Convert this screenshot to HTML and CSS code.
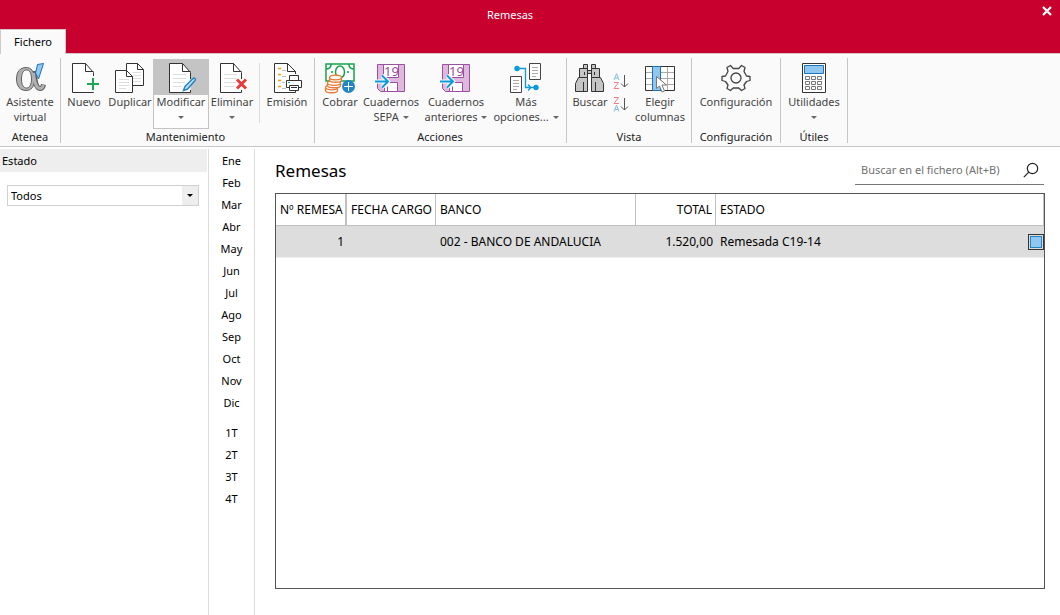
FILE: index.html
```html
<!DOCTYPE html>
<html lang="es">
<head>
<meta charset="utf-8">
<title>Remesas</title>
<link rel="stylesheet" href="styles.css">
</head>
<body>
<div class="app">
  <header class="titlebar">
    <div class="titlebar-row">
      <span class="window-title">Remesas</span>
      <button class="close" type="button" aria-label="Cerrar">
        <svg width="10" height="10" viewBox="0 0 10 10"><path d="M1 1l8 8M9 1L1 9" stroke="#fff" stroke-width="2.2"/></svg>
      </button>
    </div>
    <nav class="tabs"><button class="tab" type="button">Fichero</button></nav>
  </header>

  <div class="ribbon">
    <section class="group">
      <div class="tools">
        <button class="tool w-52" type="button">
          <svg class="icon" width="32" height="32" viewBox="0 0 32 32" fill="none">
            <path d="M20 9C21 18 21.500 26.500 26 26.500C28 26.500 29 25 29.500 22.500" stroke="#606060" stroke-width="5"/>
            <path d="M12 5.500C17 5.500 20.500 9 20.500 17C20.500 25 17 28.500 12 28.500C6 28.500 2.500 24 2.500 17C2.500 10 6 5.500 12 5.500zM12.500 8C9.500 8 7.500 11 7.500 17C7.500 23 9.500 26 12.500 26C15.500 26 17.500 23 17.500 17C17.500 11 15.500 8 12.500 8z" fill="#b0b0b0" fill-rule="evenodd" stroke="#606060"/>
            <path d="M19.500 11C20.500 19 21.500 26.500 26 26.500C28 26.500 29 25 29.300 23" stroke="#b0b0b0" stroke-width="2.800"/>
            <path d="M23.500 2.500L29.500 1.500L24.500 17L21.500 11z" fill="#8fc7f0" stroke="#1d72b8"/>
          </svg>
          <span>Asistente<br>virtual</span>
        </button>
      </div>
      <h2 class="group-name">Atenea</h2>
    </section>

    <section class="group flush">
      <div class="tools">
        <button class="tool w-46" type="button">
          <svg class="icon" width="32" height="32" viewBox="0 0 32 32" fill="none">
            <path d="M25.500 17V10.500L17.500 1.500H4.500V30.500H25.500V28" fill="#fff" stroke="#333"/>
            <path d="M17.500 1.500V9.500H25.500" stroke="#333"/>
            <path d="M25 14v16M18 22h10" stroke="#fafafa" stroke-width="4"/>
            <path d="M25 16v12M19 22h12" stroke="#1aa851" stroke-width="2"/>
          </svg>
          <span>Nuevo</span>
        </button>
        <button class="tool w-46" type="button">
          <svg class="icon" width="32" height="32" viewBox="0 0 32 32" fill="none">
            <path d="M12.500 1.500H23.500L29.500 7.500V23.500H12.500z" fill="#fff" stroke="#333"/>
            <path d="M23.500 1.500V7.500H29.500" stroke="#333"/>
            <path d="M19 10.500h8M19 13.500h8M19 16.500h8M19 19.500h8" stroke="#ddd"/>
            <path d="M1.500 8.500H12.500L18.500 14.500V30.500H1.500z" fill="#fff" stroke="#333"/>
            <path d="M12.500 8.500V14.500H18.500" stroke="#333"/>
            <path d="M5 17.500h10M5 20.500h10M5 23.500h10M5 26.500h7" stroke="#ddd"/>
          </svg>
          <span>Duplicar</span>
        </button>
        <button class="tool w-56 selected" type="button">
          <svg class="icon" width="32" height="32" viewBox="0 0 32 32" fill="none">
            <path d="M25.500 17V10.500L17.500 1.500H4.500V30.500H25.500V28" fill="#fff" stroke="#333"/>
            <path d="M17.500 1.500V9.500H25.500" stroke="#333"/>
            <path d="M8 12.500h13M8 16.500h13M8 20.500h12M8 24.500h9" stroke="#ddd"/>
            <path d="M18.500 28.500l1.500-4L28 16.500c1.500-1 3 .5 2 2L22.500 27z" fill="#c4e2f7" stroke="#2384c6" stroke-width="1.500"/>
          </svg>
          <span>Modificar</span><i class="arrow"></i>
        </button>
        <button class="tool w-46" type="button">
          <svg class="icon" width="32" height="32" viewBox="0 0 32 32" fill="none">
            <path d="M25.500 17V10.500L17.500 1.500H4.500V30.500H25.500V28" fill="#fff" stroke="#333"/>
            <path d="M17.500 1.500V9.500H25.500" stroke="#333"/>
            <path d="M8 12.500h13M8 16.500h13M8 20.500h12M8 24.500h11" stroke="#ddd"/>
            <path d="M21 17.500l9 9M30 17.500l-9 9" stroke="#fff" stroke-width="5"/>
            <path d="M21 17.500l9 9M30 17.500l-9 9" stroke="#e83a3a" stroke-width="3"/>
          </svg>
          <span>Eliminar</span><i class="arrow"></i>
        </button>
        <div class="divider"></div>
        <button class="tool w-46" type="button">
          <svg class="icon" width="32" height="32" viewBox="0 0 32 32" fill="none">
            <path d="M24.500 12V9.500L16.500 1.500H3.500V30.500H24.500V28" fill="#fff" stroke="#333"/>
            <path d="M16.500 1.500V9.500H24.500" stroke="#333"/>
            <path d="M7 6.500h3M7 12.500h3M7 18.500h3M7 24.500h3" stroke="#f09a1c" stroke-width="1.500"/>
            <path d="M11 8.500h4M11 14.500h4M11 20.500h3M11 26.500h4" stroke="#bbb"/>
            <path d="M18.500 18.500V13.500H27.500V18.500M18.500 25.500H15.500V18.500H30.500V25.500H27.500" fill="#fff" stroke="#333"/>
            <path d="M18.500 23.500H27.500V28.500H18.500zM20 25.500h6" fill="#fff" stroke="#333"/>
            <path d="M17 20.500h2" stroke="#0a9bdc"/>
          </svg>
          <span>Emisión</span>
        </button>
      </div>
      <h2 class="group-name">Mantenimiento</h2>
    </section>

    <section class="group wide">
      <div class="tools">
        <button class="tool w-42" type="button">
          <svg class="icon" width="32" height="32" viewBox="0 0 32 32" fill="none">
            <path d="M2 2H30V19H2z" fill="#fff" stroke="#16a34a" stroke-width="1.500"/>
            <path d="M2 7Q7 7 7 2M30 7Q25 7 25 2" stroke="#16a34a" stroke-width="1.500"/>
            <ellipse cx="16" cy="10" rx="4.500" ry="6" stroke="#16a34a" stroke-width="1.500"/>
            <circle cx="8" cy="10" r="1" fill="#16a34a"/><circle cx="24" cy="10" r="1" fill="#16a34a"/>
            <g fill="#fff" stroke="#e77a35" stroke-width="1.300">
              <path d="M1.500 26v2.500c0 3 12 3 12 0V26"/><ellipse cx="7.500" cy="25.500" rx="6" ry="2.300"/>
              <path d="M3.500 21v2.500c0 3 13 3 13 0V21"/><ellipse cx="10" cy="21" rx="6.500" ry="2.300"/>
              <path d="M5.500 15.500v2.500c0 3 12 3 12 0v-2.500"/><ellipse cx="11.500" cy="15.500" rx="6" ry="2.300"/>
            </g>
            <circle cx="24.500" cy="24.500" r="6.500" fill="#2384c6"/>
            <path d="M24.500 20v9M20 24.500h9" stroke="#fff"/>
          </svg>
          <span>Cobrar</span>
        </button>
        <button class="tool w-60" type="button">
          <svg class="icon" width="32" height="32" viewBox="0 0 32 32" fill="none">
            <path d="M2.500 2.500H29.500V29.500H5.500L2.500 26.500z" fill="#dfb8de" stroke="#9b4fa0"/>
            <path d="M8.500 2.500H23.500V15.500H8.500zM9.500 20.500H22.500V29.500H9.500z" fill="#fff" stroke="#9b4fa0"/>
            <path d="M12.500 24.500v5" stroke="#9b4fa0"/>
            <text class="icon-number" x="9" y="14">19</text>
            <path d="M0 19.500h13M7 13.500l6 6l-6 6" stroke="#fff" stroke-width="4"/>
            <path d="M0 19.500h13M7 13.500l6 6l-6 6" stroke="#0a9bdc" stroke-width="2"/>
          </svg>
          <span>Cuadernos<br>SEPA <i class="arrow inline"></i></span>
        </button>
        <button class="tool w-70" type="button">
          <svg class="icon" width="32" height="32" viewBox="0 0 32 32" fill="none">
            <path d="M2.500 2.500H29.500V29.500H5.500L2.500 26.500z" fill="#dfb8de" stroke="#9b4fa0"/>
            <path d="M8.500 2.500H23.500V15.500H8.500zM9.500 20.500H22.500V29.500H9.500z" fill="#fff" stroke="#9b4fa0"/>
            <path d="M12.500 24.500v5" stroke="#9b4fa0"/>
            <text class="icon-number" x="9" y="14">19</text>
            <path d="M0 19.500h13M7 13.500l6 6l-6 6" stroke="#fff" stroke-width="4"/>
            <path d="M0 19.500h13M7 13.500l6 6l-6 6" stroke="#0a9bdc" stroke-width="2"/>
          </svg>
          <span>Cuadernos<br>anteriores <i class="arrow inline"></i></span>
        </button>
        <button class="tool w-70" type="button">
          <svg class="icon" width="32" height="32" viewBox="0 0 32 32" fill="none">
            <path d="M19.500 1.500H30.500V17.500H19.500zM.5 14.500H11.500V30.500H.5z" fill="#fff" stroke="#444"/>
            <path d="M22 5.500h6M22 8.500h6M22 11.500h6M22 14.500h4M3 18.500h6M3 21.500h6M3 24.500h6M3 27.500h4" stroke="#aaa"/>
            <path d="M7 6.500h8.500v19H25M18 22.500l3 3l-3 3" stroke="#0a9bdc" stroke-width="1.300"/>
            <circle cx="7" cy="6.500" r="2.700" fill="#0a9bdc"/><circle cx="26" cy="25.500" r="2.700" fill="#0a9bdc"/>
          </svg>
          <span>Más<br>opciones... <i class="arrow inline"></i></span>
        </button>
      </div>
      <h2 class="group-name">Acciones</h2>
    </section>

    <section class="group">
      <div class="tools">
        <button class="tool w-38" type="button">
          <svg class="icon" width="32" height="32" viewBox="0 0 32 32" fill="none" stroke="#333">
            <path d="M9.500 2.500h4v4h-4zM17.500 2.500h4v4h-4zM13.500 8.500h4v3h-4zM5.500 6.500h8v9h-8zM17.500 6.500h8v9h-8zM4.500 15.500h9v14h-12v-8zM17.500 15.500h9l3 6v8h-12z" fill="#c5c5c5"/>
            <path d="M10.500 10v3M20.500 10v3M9.500 20v9M21.500 20v9"/>
          </svg>
          <span>Buscar</span>
        </button>
        <div class="sorters">
          <button class="sorter" type="button" aria-label="Orden ascendente">
            <svg width="16" height="16" viewBox="0 0 16 16" fill="none"><path d="M1 7L3.500 .7L6 7M2 5h3" stroke="#7fbde6"/><path d="M1 9.500h4.500L1 15.500h5" stroke="#ef7f84"/><path d="M11.500 2v12M8 10.500l3.500 3.500l3.500-3.500" stroke="#555"/></svg>
          </button>
          <button class="sorter" type="button" aria-label="Orden descendente">
            <svg width="16" height="16" viewBox="0 0 16 16" fill="none"><path d="M1 1.500h4.500L1 7.500h5" stroke="#ef7f84"/><path d="M1 15.500L3.500 9.200L6 15.500M2 13.500h3" stroke="#7fbde6"/><path d="M11.500 2v12M8 10.500l3.500 3.500l3.500-3.500" stroke="#555"/></svg>
          </button>
        </div>
        <button class="tool w-54" type="button">
          <svg class="icon" width="32" height="32" viewBox="0 0 32 32" fill="none">
            <path d="M1.500 4.500H30.500V28.500H1.500z" fill="#fff"/>
            <path d="M2 10.500h28M2 16.500h28M2 22.500h28M23.500 5v23" stroke="#aaa"/>
            <path d="M1.500 4.500H30.500V28.500H1.500z" stroke="#333"/>
            <path d="M8.500 4.500H16.500V28.500H8.500z" fill="#8fc7f0" stroke="#2071ad"/>
            <path d="M12.500 14.500v12l3-2.500l2.500 6l2.500-1l-2.500-6h4.500z" fill="#fff" stroke="#777"/>
          </svg>
          <span>Elegir<br>columnas</span>
        </button>
      </div>
      <h2 class="group-name">Vista</h2>
    </section>

    <section class="group">
      <div class="tools">
        <button class="tool w-80" type="button">
          <svg class="icon" width="32" height="32" viewBox="0 0 32 32" fill="none" stroke="#444" stroke-width="1.300">
            <circle cx="16" cy="16" r="5"/>
            <path d="M10.500 3.500L13.200 6.500H18.800L21.500 3.500L25 5.500L24 9.500L26.500 14L30 14.500V18.500L26.500 19.500L24 23L25 26.500L21.500 28.500L18.800 26H13.200L10.500 28.500L7 26.500L8 23L5.500 19.500L2 18.500V14.500L5.500 14L8 9.500L7 5.500z" stroke-linejoin="round"/>
          </svg>
          <span>Configuración</span>
        </button>
      </div>
      <h2 class="group-name">Configuración</h2>
    </section>

    <section class="group">
      <div class="tools">
        <button class="tool w-58" type="button">
          <svg class="icon" width="32" height="32" viewBox="0 0 32 32" fill="none">
            <path d="M4.500 1.500H27.500V30.500H4.500z" fill="#fff" stroke="#333"/>
            <path d="M6.500 3.500H25.500V11.500H6.500z" fill="#8fc7f0" stroke="#1d72b8"/>
            <path d="M7.500 14.500h4v3h-4zM13.500 14.500h4v3h-4zM19.500 14.500h4v3h-4zM7.500 19.500h4v3h-4zM13.500 19.500h4v3h-4zM19.500 19.500h4v3h-4zM7.500 24.500h4v3h-4zM13.500 24.500h4v3h-4zM19.500 24.500h4v3h-4z" stroke="#777"/>
          </svg>
          <span>Utilidades</span><i class="arrow"></i>
        </button>
      </div>
      <h2 class="group-name">Útiles</h2>
    </section>
  </div>

  <div class="workspace">
    <aside class="filters">
      <label class="filter-title" for="estado">Estado</label>
      <div class="select-box">
        <select id="estado"><option>Todos</option></select>
        <span class="select-button"><i class="arrow dark"></i></span>
      </div>
    </aside>
    <nav class="periods" aria-label="Periodo">
      <button type="button">Ene</button><button type="button">Feb</button><button type="button">Mar</button><button type="button">Abr</button><button type="button">May</button><button type="button">Jun</button><button type="button">Jul</button><button type="button">Ago</button><button type="button">Sep</button><button type="button">Oct</button><button type="button">Nov</button><button type="button">Dic</button>
      <button class="first-quarter" type="button">1T</button><button type="button">2T</button><button type="button">3T</button><button type="button">4T</button>
    </nav>
    <main class="content">
      <div class="content-head">
        <h1>Remesas</h1>
        <div class="search">
          <input type="search" aria-label="Buscar en el fichero" placeholder="Buscar en el fichero (Alt+B)">
          <button type="button" aria-label="Buscar">
            <svg width="16" height="16" viewBox="0 0 16 16" fill="none" stroke="#222" stroke-width="1.200"><circle cx="9.500" cy="6.500" r="5.200"/><path d="M5.800 10.200L.8 15.200"/></svg>
          </button>
        </div>
      </div>
      <div class="grid">
        <table>
          <colgroup><col class="c-num"><col class="c-date"><col class="c-bank"><col class="c-total"><col></colgroup>
          <thead><tr><th class="thick">Nº REMESA</th><th>FECHA CARGO</th><th>BANCO</th><th class="num">TOTAL</th><th>ESTADO</th></tr></thead>
          <tbody><tr><td class="num">1</td><td></td><td>002 - BANCO DE ANDALUCIA</td><td class="num">1.520,00</td><td class="state"><div class="state-row"><span>Remesada C19-14</span><button class="marker" type="button" aria-label="Color de estado"></button></div></td></tr></tbody>
        </table>
      </div>
    </main>
  </div>
</div>
</body>
</html>
```
FILE: styles.css
```css
* { box-sizing: border-box; }
body { margin: 0; background: #fff; color: #000; font: 11px/15px "Noto Sans", "Open Sans", sans-serif; }
button, input, select { font: inherit; color: inherit; margin: 0; padding: 0; border: 0; background: none; }
h1, h2 { margin: 0; font-weight: 400; }
svg { display: block; }

.app { display: flex; flex-direction: column; min-height: 100vh; }

.titlebar { background: #c8002e; }
.titlebar-row { display: flex; height: 29px; }
.window-title { flex: 1; color: #fff; text-align: center; line-height: 29px; }
.close { display: flex; justify-content: center; width: 26px; margin-left: 14px; padding-top: 6px; }
.tabs { position: relative; display: flex; height: 25px; margin-bottom: -1px; }
.tab { width: 66px; padding-bottom: 2px; background: #fafafa; border: 1px solid #d0c8ca; border-bottom: 0; }

.ribbon { display: flex; height: 94px; padding-top: 4px; background: #fafafa; border-top: 1px solid #d0c8ca; border-bottom: 1px solid #c6c6c6; }
.group { display: flex; flex-direction: column; height: 85px; padding: 0 4px; border-right: 1px solid #c6c6c6; }
.group.flush { padding-left: 0; }
.group.wide { padding-right: 5px; }
.tools { display: flex; height: 74px; padding-top: 1px; }
.group-name { font-size: 11px; line-height: 15px; color: #222; text-align: center; }
.tool { display: flex; flex-direction: column; align-items: center; height: 70px; padding-top: 2px; border: 1px solid transparent; color: #444; white-space: nowrap; text-align: center; }
.icon { flex: none; }
.tool > span { line-height: 15px; }
.selected { background: linear-gradient(#c4c4c4 35px, #fdfdfd 35px); border-color: #c4c4c4; }
.w-38 { width: 38px; }
.w-42 { width: 42px; }
.w-46 { width: 46px; }
.w-52 { width: 52px; }
.w-54 { width: 54px; }
.w-56 { width: 56px; }
.w-58 { width: 58px; }
.w-60 { width: 60px; }
.w-70 { width: 70px; }
.w-80 { width: 80px; }
.icon-number { font: 13px "Noto Sans", sans-serif; fill: #9b4fa0; }
.divider { width: 1px; height: 60px; margin: 4px 4px 0; background: #dcdcdc; }
.arrow { width: 0; height: 0; margin-top: 7px; border: 3px solid transparent; border-top-color: #666; border-bottom: 0; }
.arrow.inline { display: inline-block; margin: 0 0 2px 1px; }
.arrow.dark { margin: 0; border-top-color: #000; }
.sorters { display: flex; flex-direction: column; gap: 7px; width: 24px; padding: 14px 0 0 4px; }
.sorter { width: 16px; height: 16px; }

.workspace { flex: 1; display: flex; padding-top: 2px; }
.filters { width: 208px; padding-right: 1px; }
.filter-title { display: block; height: 23px; padding-left: 2px; line-height: 23px; background: #eee; }
.select-box { display: flex; align-items: stretch; height: 21px; margin: 13px 8px 0 7px; border: 1px solid #d0d0d0; }
.select-box select { flex: 1; appearance: none; padding-left: 3px; outline: 0; }
.select-button { display: flex; align-items: center; justify-content: center; width: 16px; background: #eee; pointer-events: none; }
.periods { display: flex; flex-direction: column; width: 47px; border: 1px solid #dcdcdc; border-width: 0 1px; }
.periods button { height: 22px; }
.periods .first-quarter { margin-top: 8px; }

.content { flex: 1; display: flex; flex-direction: column; padding: 0 15px 26px 20px; }
.content-head { display: flex; justify-content: space-between; height: 44px; padding: 7px 1px 8px 0; }
h1 { font-size: 17px; line-height: 29px; }
.search { display: flex; align-items: center; width: 189px; border-bottom: 1px solid #777; }
.search input { flex: 1; min-width: 0; padding: 0 0 2px 6px; outline: 0; }
.search input::placeholder { color: #707070; opacity: 1; }
.search button { width: 21px; }

.grid { flex: 1; border: 1px solid #555; }
table { width: 100%; table-layout: fixed; border-collapse: separate; border-spacing: 0; }
.c-num { width: 71px; }
.c-date { width: 89px; }
.c-bank { width: 200px; }
.c-total { width: 80px; }
th, td { height: 32px; padding: 0 3px 0 4px; text-align: left; font-weight: 400; font-size: 12px; white-space: nowrap; }
th { border-right: 1px solid #c0c0c0; border-bottom: 1px solid #c0c0c0; }
.thick { border-right-width: 2px; }
td { background: #ddd; border-bottom: 1px solid #eee; }
.num { text-align: right; }
.state { padding-right: 0; }
.state-row { display: flex; align-items: center; justify-content: space-between; }
.marker { width: 16px; height: 16px; border: 1px solid #333; background: #8fc7f0; box-shadow: inset 0 0 0 1px #ddd, inset 0 0 0 2px #2384c6; }
```
